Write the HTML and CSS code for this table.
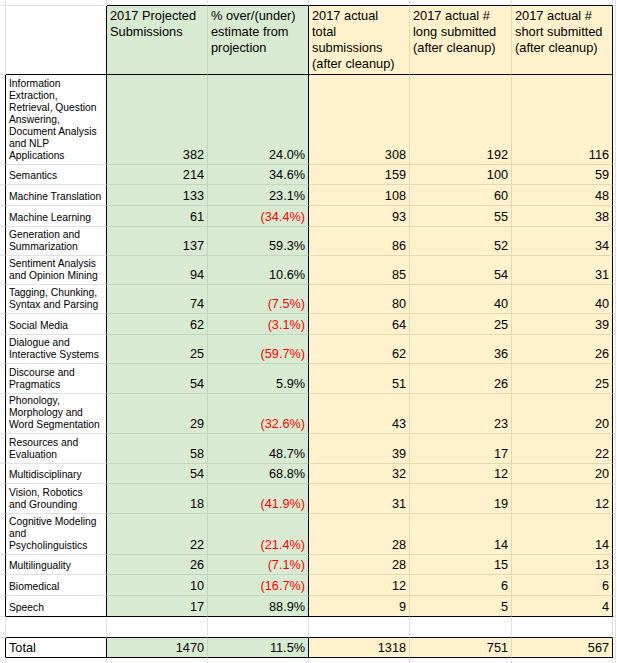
FILE: index.html
```html
<!DOCTYPE html>
<html>
<head>
<meta charset="utf-8">
<link rel="stylesheet" href="styles.css">
</head>
<body>
<table class="sheet">
  <colgroup>
    <col class="w-s"><col class="w-a"><col class="w-b"><col class="w-c"><col class="w-d"><col class="w-e"><col class="w-f"><col class="w-t">
  </colgroup>
  <tr class="r-top"><td class="s"></td><td class="a0"></td><td class="g0 bb"></td><td class="g0 bb"></td><td class="y0 bb"></td><td class="y0 bb"></td><td class="y0 bb"></td><td class="t"></td></tr>
  <tr class="r-hd hd">
    <td class="s"></td><td class="a bb"></td>
    <td class="g bb">2017 Projected<br>Submissions</td>
    <td class="g gc bb">% over/(under)<br>estimate from<br>projection</td>
    <td class="y bb">2017 actual<br>total<br>submissions<br>(after cleanup)</td>
    <td class="y bb">2017 actual #<br>long submitted<br>(after cleanup)</td>
    <td class="y yf bb">2017 actual #<br>short submitted<br>(after cleanup)</td>
    <td class="t"></td>
  </tr>
  <tr class="r7"><td class="s sk"></td><td class="a lab">Information<br>Extraction,<br>Retrieval, Question<br>Answering,<br>Document Analysis<br>and NLP<br>Applications</td><td class="g">382</td><td class="g gc">24.0%</td><td class="y">308</td><td class="y">192</td><td class="y yf">116</td><td class="t"></td></tr>
  <tr class="r1n"><td class="s sk"></td><td class="a lab">Semantics</td><td class="g">214</td><td class="g gc">34.6%</td><td class="y">159</td><td class="y">100</td><td class="y yf">59</td><td class="t"></td></tr>
  <tr class="r1"><td class="s sk"></td><td class="a lab">Machine Translation</td><td class="g">133</td><td class="g gc">23.1%</td><td class="y">108</td><td class="y">60</td><td class="y yf">48</td><td class="t"></td></tr>
  <tr class="r1"><td class="s sk"></td><td class="a lab">Machine Learning</td><td class="g">61</td><td class="g gc neg">(34.4%)</td><td class="y">93</td><td class="y">55</td><td class="y yf">38</td><td class="t"></td></tr>
  <tr class="r2"><td class="s sk"></td><td class="a lab">Generation and<br>Summarization</td><td class="g">137</td><td class="g gc">59.3%</td><td class="y">86</td><td class="y">52</td><td class="y yf">34</td><td class="t"></td></tr>
  <tr class="r2"><td class="s sk"></td><td class="a lab">Sentiment Analysis<br>and Opinion Mining</td><td class="g">94</td><td class="g gc">10.6%</td><td class="y">85</td><td class="y">54</td><td class="y yf">31</td><td class="t"></td></tr>
  <tr class="r2"><td class="s sk"></td><td class="a lab">Tagging, Chunking,<br>Syntax and Parsing</td><td class="g">74</td><td class="g gc neg">(7.5%)</td><td class="y">80</td><td class="y">40</td><td class="y yf">40</td><td class="t"></td></tr>
  <tr class="r1"><td class="s sk"></td><td class="a lab">Social Media</td><td class="g">62</td><td class="g gc neg">(3.1%)</td><td class="y">64</td><td class="y">25</td><td class="y yf">39</td><td class="t"></td></tr>
  <tr class="r2"><td class="s sk"></td><td class="a lab">Dialogue and<br>Interactive Systems</td><td class="g">25</td><td class="g gc neg">(59.7%)</td><td class="y">62</td><td class="y">36</td><td class="y yf">26</td><td class="t"></td></tr>
  <tr class="r2w"><td class="s sk"></td><td class="a lab">Discourse and<br>Pragmatics</td><td class="g">54</td><td class="g gc">5.9%</td><td class="y">51</td><td class="y">26</td><td class="y yf">25</td><td class="t"></td></tr>
  <tr class="r3"><td class="s sk"></td><td class="a lab">Phonology,<br>Morphology and<br>Word Segmentation</td><td class="g">29</td><td class="g gc neg">(32.6%)</td><td class="y">43</td><td class="y">23</td><td class="y yf">20</td><td class="t"></td></tr>
  <tr class="r2w"><td class="s sk"></td><td class="a lab">Resources and<br>Evaluation</td><td class="g">58</td><td class="g gc">48.7%</td><td class="y">39</td><td class="y">17</td><td class="y yf">22</td><td class="t"></td></tr>
  <tr class="r1n"><td class="s sk"></td><td class="a lab">Multidisciplinary</td><td class="g">54</td><td class="g gc">68.8%</td><td class="y">32</td><td class="y">12</td><td class="y yf">20</td><td class="t"></td></tr>
  <tr class="r2w"><td class="s sk"></td><td class="a lab">Vision, Robotics<br>and Grounding</td><td class="g">18</td><td class="g gc neg">(41.9%)</td><td class="y">31</td><td class="y">19</td><td class="y yf">12</td><td class="t"></td></tr>
  <tr class="r3w"><td class="s sk"></td><td class="a lab">Cognitive Modeling<br>and<br>Psycholinguistics</td><td class="g">22</td><td class="g gc neg">(21.4%)</td><td class="y">28</td><td class="y">14</td><td class="y yf">14</td><td class="t"></td></tr>
  <tr class="r1n"><td class="s sk"></td><td class="a lab">Multilinguality</td><td class="g">26</td><td class="g gc neg">(7.1%)</td><td class="y">28</td><td class="y">15</td><td class="y yf">13</td><td class="t"></td></tr>
  <tr class="r1"><td class="s sk"></td><td class="a lab">Biomedical</td><td class="g">10</td><td class="g gc neg">(16.7%)</td><td class="y">12</td><td class="y">6</td><td class="y yf">6</td><td class="t"></td></tr>
  <tr class="r1"><td class="s sk"></td><td class="a lab bb">Speech</td><td class="g bb">17</td><td class="g gc bb">88.9%</td><td class="y bb">9</td><td class="y bb">5</td><td class="y yf bb">4</td><td class="t"></td></tr>
  <tr class="r1"><td class="s"></td><td class="bb"></td><td class="bb"></td><td class="bb"></td><td class="bb"></td><td class="bb"></td><td class="bb"></td><td class="t"></td></tr>
  <tr class="r1n"><td class="s sk"></td><td class="a total bb">Total</td><td class="g bb">1470</td><td class="g gc bb">11.5%</td><td class="y bb">1318</td><td class="y bb">751</td><td class="y yf bb">567</td><td class="t"></td></tr>
  <tr class="r1"><td class="s"></td><td></td><td></td><td></td><td></td><td></td><td></td><td class="t"></td></tr>
</table>
</body>
</html>
```

FILE: styles.css
```css
html, body {
  margin: 0;
  padding: 0;
  background: #ffffff;
  overflow: hidden;
}

.sheet {
  border-collapse: separate;
  border-spacing: 0;
  table-layout: fixed;
  width: 616px;
  font-family: "Liberation Sans", Arial, sans-serif;
  color: #000;
}

.w-s { width: 6px; }
.w-a { width: 101px; }
.w-b { width: 101px; }
.w-c { width: 101px; }
.w-d { width: 101px; }
.w-e { width: 102px; }
.w-f { width: 101px; }
.w-t { width: 3px; }

.sheet td {
  box-sizing: border-box;
  padding: 0 3px 2px 3px;
  border-right: 1px solid #e2e2e2;
  border-bottom: 1px solid #e2e2e2;
  vertical-align: bottom;
  text-align: right;
  white-space: nowrap;
  overflow: hidden;
  font-size: 12.7px;
}

.sheet td.s,
.sheet td.t {
  padding: 0;
}

.sheet td.sk { border-right-color: #000; }

.r-top { height: 6px; }
.r-hd { height: 68px; }
.r7 { height: 90px; }
.r1 { height: 21px; }
.r1n { height: 20px; }
.r2 { height: 29px; }
.r2w { height: 30px; }
.r3 { height: 40px; }
.r3w { height: 41px; }

.hd td {
  vertical-align: top;
  text-align: left;
  padding-top: 2px;
  font-size: 12.8px;
  line-height: 16px;
}

.sheet td.a { border-right-color: #000; }
.sheet td.a0 { border-right-color: #e2e2e2; }

.sheet td.g {
  background: #d9ead3;
  border-right-color: #c4d5be;
  border-bottom-color: #c4d5be;
}
.sheet td.y {
  background: #fff2cc;
  border-right-color: #e6d8b0;
  border-bottom-color: #e6d8b0;
}
.sheet td.gc { border-right-color: #000; }
.sheet td.yf { border-right-color: #000; }

.sheet td.bb { border-bottom-color: #000; }

.sheet td.lab {
  text-align: left;
  font-size: 10.3px;
  line-height: 12px;
}

.sheet td.total {
  text-align: left;
  font-size: 12.7px;
}

.neg { color: #ff0000; }
```
